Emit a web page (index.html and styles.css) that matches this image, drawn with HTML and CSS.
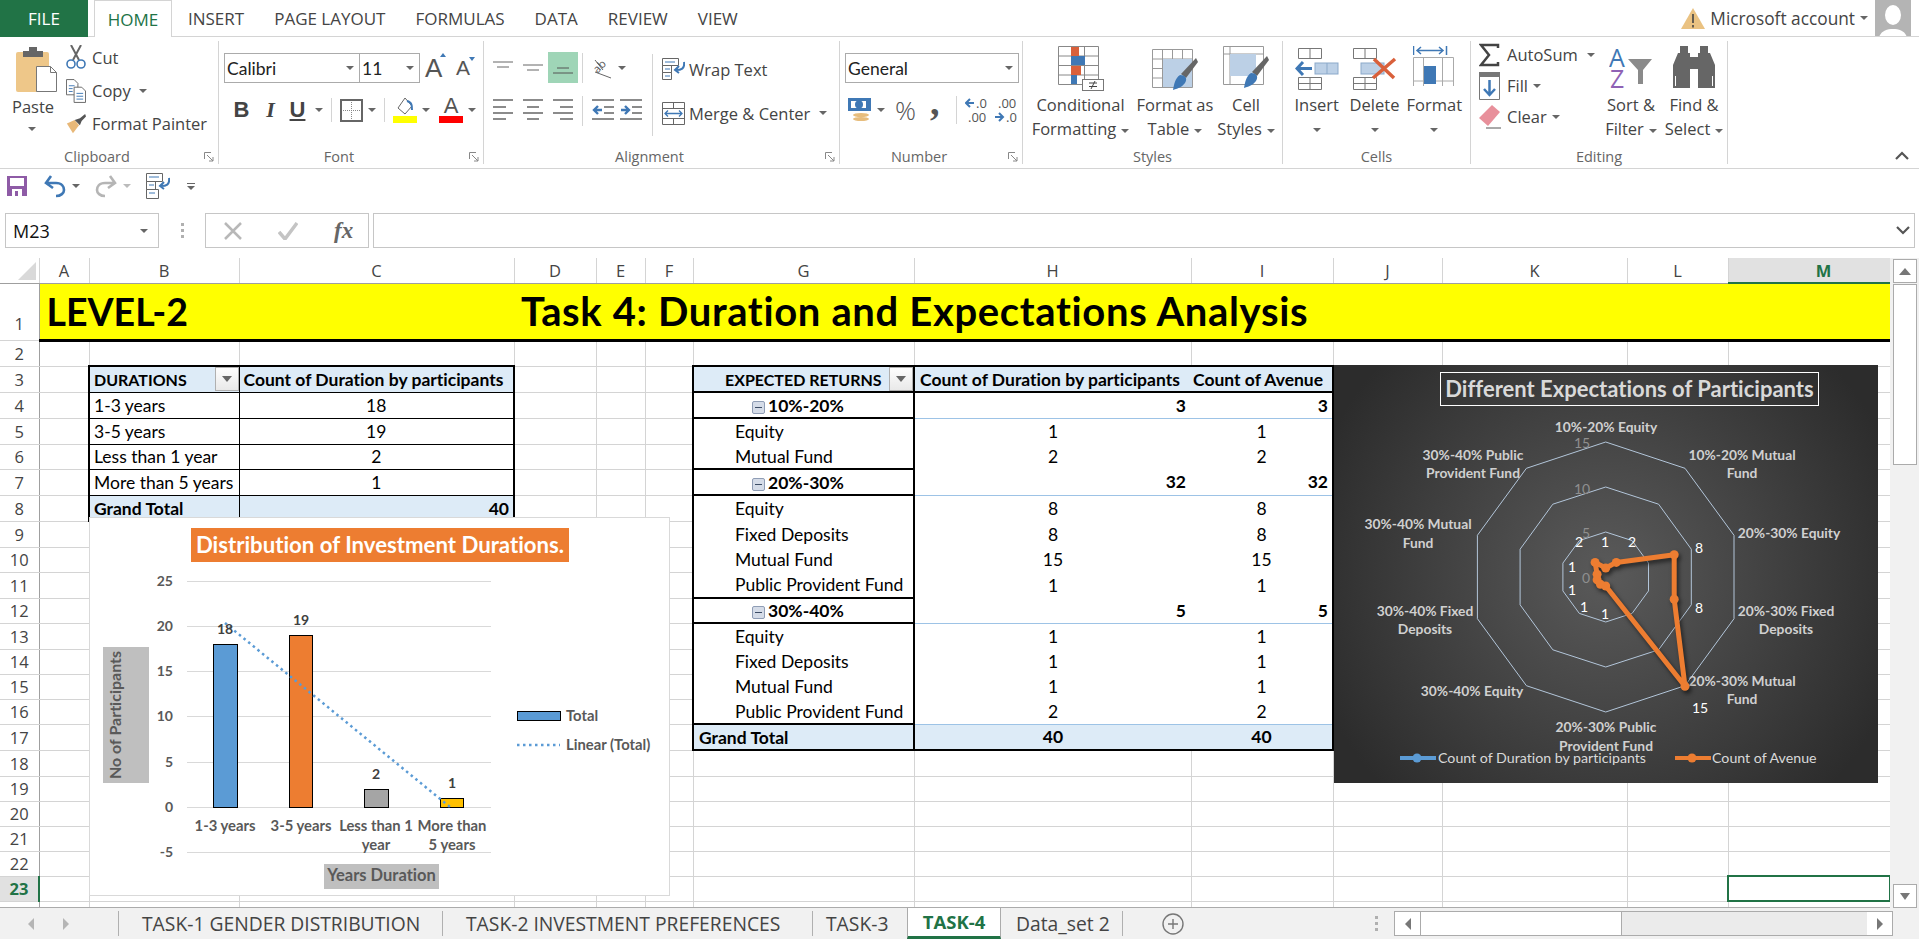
FILE: index.html
```html
<!DOCTYPE html>
<html lang="en">
<head>
<meta charset="UTF-8">
<title>Task 4 - Excel</title>
<link rel="stylesheet" href="styles.css">
</head>
<body>

<!-- ribbon tabs -->
<nav class="tabs">
  <div class="tab-file">FILE</div>
  <div class="tab tab-home">HOME</div>
  <div class="tab">INSERT</div>
  <div class="tab">PAGE LAYOUT</div>
  <div class="tab">FORMULAS</div>
  <div class="tab">DATA</div>
  <div class="tab">REVIEW</div>
  <div class="tab">VIEW</div>
  <div class="account">
    <svg width="24" height="21" viewBox="0 0 24 21"><path d="M12 0L24 21H0Z" fill="#eac282"/><path d="M12 6v9M12 17v2.500" stroke="#444" stroke-width="1.600"/></svg>
    <span>Microsoft account</span>
    <i class="caret"></i>
    <svg class="avatar" width="36" height="44" viewBox="0 0 36 44"><rect width="36" height="44" fill="#b4b4b4"/><ellipse cx="18" cy="15" rx="8" ry="10" fill="#fff"/><path d="M3 44c0-12 7-15 15-15s15 3 15 15z" fill="#fff"/></svg>
  </div>
</nav>

<!-- ribbon -->
<div class="ribbon">

  <section class="group g-clip">
    <div class="group-body">
      <div class="paste">
        <svg width="42" height="46" viewBox="0 0 42 46"><rect y="6" width="33" height="40" rx="2" fill="#eec789"/><path d="M7 5h6V1h8v4h6v6H7z" fill="#666"/><path d="M20.500 20.500h14l6 6v19h-20z" fill="#fff" stroke="#777"/><path d="M34.500 20.500v6h6" fill="none" stroke="#777"/></svg>
        <span class="paste-label">Paste</span>
        <i class="caret"></i>
      </div>
      <div class="small-col">
        <div class="small"><svg width="20" height="25" viewBox="0 0 20 25"><path d="M5 0l8 15M15 0L7 15" stroke="#666" stroke-width="2"/><circle cx="5" cy="19" r="4" fill="none" stroke="#3f78b5" stroke-width="1.600"/><circle cx="15" cy="19" r="4" fill="none" stroke="#3f78b5" stroke-width="1.600"/></svg><span>Cut</span></div>
        <div class="small"><svg width="20" height="24" viewBox="0 0 21 25"><path d="M.5.500h8l4 4v12H.5z" fill="#fff" stroke="#666"/><path d="M8.500 8.500h8l4 4v12h-12z" fill="#fff" stroke="#666"/><path d="M3 7h6M3 10h4M3 13h4M11 15h7M11 18h7M11 21h7" stroke="#3f78b5"/></svg><span>Copy</span><i class="caret caret-copy"></i></div>
        <div class="small"><svg width="20" height="20" viewBox="0 0 23 23"><path d="M1 11l9-4 5 6-7 9z" fill="#e8b878"/><path d="M10 7l6-2 6-5 1 3-5 5-2 5z" fill="#555"/></svg><span>Format Painter</span></div>
      </div>
    </div>
    <div class="group-label"><span>Clipboard</span><svg class="launch" width="10" height="10" viewBox="0 0 10 10"><path d="M.5 7V.5H7M3 3l6 6M9 5v4H5" fill="none" stroke="#888"/></svg></div>
  </section>

  <section class="group g-font">
    <div class="group-body column">
      <div class="row-top">
        <div class="combo combo-font"><span>Calibri</span><i class="caret"></i></div>
        <div class="combo combo-size"><span>11</span><i class="caret"></i></div>
        <div class="grow"><span class="grow-a">A</span><i class="tri tri-up"></i></div>
        <div class="grow grow-down"><span class="grow-a grow-sm">A</span><i class="tri tri-down"></i></div>
      </div>
      <div class="row-low">
        <span class="fmt fmt-b">B</span>
        <span class="fmt fmt-i">I</span>
        <span class="fmt fmt-u">U</span>
        <i class="caret"></i>
        <i class="vsep vsep-font"></i>
        <svg width="23" height="23" viewBox="0 0 23 23"><rect x="1" y="1" width="21" height="21" fill="#fff" stroke="#666" stroke-width="2"/><path d="M11.500 3v17M3 11.500h17" stroke="#888" stroke-dasharray="1 1"/></svg>
        <i class="caret caret-gap"></i>
        <i class="vsep vsep-font"></i>
        <span class="swatch"><svg width="24" height="18" viewBox="0 0 24 18"><path d="M12 0l-7 10 7 6 7-8z" fill="#fff" stroke="#666"/><path d="M14 3c5 1 5 5 5 9" fill="none" stroke="#3f78b5" stroke-width="2"/></svg><i class="bar bar-yellow"></i></span>
        <i class="caret caret-gap"></i>
        <span class="swatch swatch-a"><span class="swatch-letter">A</span><i class="bar bar-red"></i></span>
        <i class="caret caret-gap"></i>
      </div>
    </div>
    <div class="group-label"><span>Font</span><svg class="launch" width="10" height="10" viewBox="0 0 10 10"><path d="M.5 7V.5H7M3 3l6 6M9 5v4H5" fill="none" stroke="#888"/></svg></div>
  </section>

  <section class="group g-align">
    <div class="group-body">
      <div class="column">
        <div class="row-top align-top">
          <span class="abtn"><svg width="20" height="14" viewBox="0 0 20 14"><path d="M0 1h20M4 6h12" stroke="#666"/></svg></span>
          <span class="abtn"><svg width="20" height="14" viewBox="0 0 20 14"><path d="M0 4h20M4 9h12" stroke="#666"/></svg></span>
          <span class="abtn abtn-on"><svg width="20" height="14" viewBox="0 0 20 14"><path d="M4 7h12M0 12h20" stroke="#555"/></svg></span>
          <i class="vsep vsep-align"></i>
          <svg class="orient" width="20" height="24" viewBox="0 0 20 24"><path d="M2 16L18 22M2 4l8 10" stroke="#666" fill="none"/><text x="1" y="15" font-size="11" fill="#555" transform="rotate(-45 6 12)">ab</text></svg>
          <i class="caret"></i>
        </div>
        <div class="row-low align-low">
          <span class="abtn"><svg width="20" height="25" viewBox="0 0 20 25"><path d="M0 1h20M0 8h13M0 14h20M0 20h13" stroke="#666" stroke-width="1.300"/></svg></span>
          <span class="abtn"><svg width="20" height="25" viewBox="0 0 20 25"><path d="M0 1h20M4 8h12M0 14h20M4 20h12" stroke="#666" stroke-width="1.300"/></svg></span>
          <span class="abtn"><svg width="20" height="25" viewBox="0 0 20 25"><path d="M0 1h20M7 8h13M0 14h20M7 20h13" stroke="#666" stroke-width="1.300"/></svg></span>
          <i class="vsep vsep-align"></i>
          <svg class="indent" width="22" height="25" viewBox="0 0 22 25"><path d="M0 1h22M12 8h10M12 14h10M0 20h22" stroke="#666" stroke-width="1.300"/><path d="M10 11H3M6 7l-4 4 4 4" fill="none" stroke="#3f78b5" stroke-width="2.400"/></svg>
          <svg class="indent" width="22" height="25" viewBox="0 0 22 25"><path d="M0 1h22M12 8h10M12 14h10M0 20h22" stroke="#666" stroke-width="1.300"/><path d="M1 11h7M5 7l4 4-4 4" fill="none" stroke="#3f78b5" stroke-width="2.400"/></svg>
        </div>
      </div>
      <i class="vsep vsep-tall"></i>
      <div class="column wrap-col">
        <div class="small small-wrap"><svg width="23" height="22" viewBox="0 0 23 22"><path d="M.5.500h16v7H.5zM.5 7.500h9v7H.5zM.5 14.500h9v7H.5z" fill="#fff" stroke="#666"/><path d="M3 4h10M3 11h5M3 18h5" stroke="#3f78b5"/><path d="M22 4c1 7-3 8-8 8M17 8l-4 4 4 3" fill="none" stroke="#3f78b5" stroke-width="2"/></svg><span>Wrap Text</span></div>
        <div class="small small-wrap"><svg width="23" height="23" viewBox="0 0 23 23"><path d="M.5.500h22v22H.5zM.5 6.500h22M.5 16.500h22M11.500.500v6M11.500 16.500v6" fill="none" stroke="#666"/><path d="M3 11.500h17M6 8.500l-3 3 3 3M17 8.500l3 3-3 3" fill="none" stroke="#3f78b5" stroke-width="1.300"/></svg><span>Merge &amp; Center</span><i class="caret caret-merge"></i></div>
      </div>
    </div>
    <div class="group-label"><span>Alignment</span><svg class="launch" width="10" height="10" viewBox="0 0 10 10"><path d="M.5 7V.5H7M3 3l6 6M9 5v4H5" fill="none" stroke="#888"/></svg></div>
  </section>

  <section class="group g-number">
    <div class="group-body column">
      <div class="row-top">
        <div class="combo combo-general"><span>General</span><i class="caret"></i></div>
      </div>
      <div class="row-low num-low">
        <svg width="24" height="26" viewBox="0 0 24 26"><rect y="1" width="23" height="13" fill="#3f78b5"/><rect x="3" y="4" width="15" height="7" fill="#fff"/><circle cx="11" cy="7.500" r="4" fill="#3f78b5"/><ellipse cx="13" cy="18" rx="8" ry="2" fill="#e7bd7d"/><ellipse cx="13" cy="22" rx="8" ry="2" fill="#e7bd7d"/></svg>
        <i class="caret caret-gap"></i>
        <span class="pct">%</span>
        <span class="comma">,</span>
        <i class="vsep vsep-num"></i>
        <svg class="dec" width="54" height="28" viewBox="0 0 54 28"><path d="M9 7H2M5 3L1 7l4 4" fill="none" stroke="#3f78b5" stroke-width="2"/><text x="11" y="12" font-size="13" fill="#555">.0</text><text x="3" y="26" font-size="13" fill="#555">.00</text><text x="33" y="12" font-size="13" fill="#555">.00</text><path d="M30 21h7M34 17l4 4-4 4" fill="none" stroke="#3f78b5" stroke-width="2"/><text x="41" y="26" font-size="13" fill="#555">.0</text></svg>
      </div>
    </div>
    <div class="group-label"><span>Number</span><svg class="launch" width="10" height="10" viewBox="0 0 10 10"><path d="M.5 7V.5H7M3 3l6 6M9 5v4H5" fill="none" stroke="#888"/></svg></div>
  </section>

  <section class="group g-styles">
    <div class="group-body">
      <div class="big big-cond">
        <svg width="46" height="45" viewBox="0 0 46 45"><path d="M.5.500h40v38H.5zM13.500.500v38M26.500.500v38M.5 10h40M.5 19.500h40M.5 29h40" fill="none" stroke="#888"/><rect x="13" y="1" width="8" height="9" fill="#d9603b"/><rect x="13" y="10" width="14" height="9" fill="#3f78b5"/><rect x="13" y="20" width="10" height="9" fill="#d9603b"/><rect x="13" y="29" width="6" height="9" fill="#3f78b5"/><rect x="24.500" y="33.500" width="21" height="11" fill="#fff" stroke="#777"/><path d="M31 37h8M31 40.500h8M37 35l-4 8" stroke="#444" fill="none"/></svg>
        <span>Conditional</span>
        <span>Formatting<i class="caret caret-in"></i></span>
      </div>
      <div class="big big-table">
        <svg width="46" height="45" viewBox="0 0 46 45"><path d="M.5 3.500h40v38H.5zM10.500 3.500v38M20.500 3.500v38M30.500 3.500v38M.5 13h40M.5 22.500h40M.5 32h40" fill="none" stroke="#999"/><rect x="11" y="13" width="29" height="28" fill="#bcd0e6"/><path d="M44 12l2 4-12 16-5-4z" fill="#666"/><path d="M28 29c5 0 8 3 5 8-3 4-6 5-12 7 1-5 2-12 7-15z" fill="#3f78b5"/></svg>
        <span>Format as</span>
        <span>Table<i class="caret caret-in"></i></span>
      </div>
      <div class="big big-cell">
        <svg width="46" height="45" viewBox="0 0 46 45"><path d="M.5.500h40v38H.5zM.5 8h40M7 .500v38" fill="none" stroke="#999"/><rect x="7" y="8" width="26" height="22" fill="#bcd0e6"/><path d="M44 10l2 4-12 16-5-4z" fill="#666"/><path d="M28 27c5 0 8 3 5 8-3 4-6 5-12 7 1-5 2-12 7-15z" fill="#3f78b5"/></svg>
        <span>Cell</span>
        <span>Styles<i class="caret caret-in"></i></span>
      </div>
    </div>
    <div class="group-label group-label-plain"><span>Styles</span></div>
  </section>

  <section class="group g-cells">
    <div class="group-body">
      <div class="big big-insert">
        <svg width="44" height="45" viewBox="0 0 44 45"><path d="M3.500 2.500h23v10h-23zM15 2.500v10M3.500 31.500h23v12h-23zM15 31.500v12M3.500 37.500h23" fill="none" stroke="#777"/><rect x="20" y="17" width="23" height="11" fill="#bcd0e6" stroke="#8ba9ca"/><path d="M32 17v11" stroke="#8ba9ca"/><path d="M17 22.500H2M8 16l-6 6.500L8 29" fill="none" stroke="#3f78b5" stroke-width="3"/></svg>
        <span>Insert</span>
        <i class="caret caret-big"></i>
      </div>
      <div class="big big-delete">
        <svg width="46" height="45" viewBox="0 0 46 45"><path d="M1.500 2.500h23v10h-23zM13 2.500v10M1.500 31.500h23v12h-23zM13 31.500v12M1.500 37.500h23" fill="none" stroke="#777"/><rect x="9" y="17" width="23" height="11" fill="#bcd0e6" stroke="#8ba9ca"/><path d="M22 13l20 19M43 13L21 32" stroke="#d9603b" stroke-width="3.500"/></svg>
        <span>Delete</span>
        <i class="caret caret-big"></i>
      </div>
      <div class="big big-format">
        <svg width="42" height="45" viewBox="0 0 42 45"><path d="M.5 0v9M33.500 0v9M4 4.500h26M8 1L4 4.500 8 8M26 1l4 3.500L26 8" fill="none" stroke="#3f78b5" stroke-width="1.500"/><path d="M.5 11.500h40v36H.5zM10.500 11.500v36M29.500 11.500v36M.5 35h40" fill="none" stroke="#aaa"/><rect x="11" y="20" width="12" height="18" fill="#3f78b5"/><rect x="0" y="40" width="42" height="5" fill="#fff"/></svg>
        <span>Format</span>
        <i class="caret caret-big"></i>
      </div>
    </div>
    <div class="group-label group-label-plain"><span>Cells</span></div>
  </section>

  <section class="group g-edit">
    <div class="group-body">
      <div class="small-col edit-col">
        <div class="small"><svg width="22" height="24" viewBox="0 0 22 24"><path d="M19 5V2H2l8 10-8 10h17v-3" fill="none" stroke="#444" stroke-width="2.500"/></svg><span>AutoSum</span><i class="caret caret-sum"></i></div>
        <div class="small"><svg width="22" height="28" viewBox="0 0 22 28"><path d="M.5.500h20v27H.5z" fill="#fff" stroke="#777"/><rect width="21" height="5" fill="#777"/><path d="M10.500 8v14M5 17l5.500 6 5.500-6" fill="none" stroke="#3f78b5" stroke-width="2.500"/></svg><span>Fill</span><i class="caret caret-fill"></i></div>
        <div class="small"><svg width="22" height="24" viewBox="0 0 22 24"><path d="M13 0l8 7-12 14-9-8z" fill="#e8909b"/><path d="M7 23h15" stroke="#555"/></svg><span>Clear</span><i class="caret caret-fill"></i></div>
      </div>
      <div class="big big-sort">
        <svg width="44" height="42" viewBox="0 0 44 42"><text x="0" y="21" font-size="25" fill="#3f78b5">A</text><text x="1" y="42" font-size="25" fill="#8f62b5">Z</text><path d="M19 13h24l-9 11v14h-5V24z" fill="#8a8a8a"/></svg>
        <span>Sort &amp;</span>
        <span>Filter<i class="caret caret-in"></i></span>
      </div>
      <div class="big big-find">
        <svg width="44" height="42" viewBox="0 0 44 42"><path d="M8 0h8v7h2v35H1V19L6 7h2zM28 0h8v7h2l5 12v23H26V7h2zM18 11h8v12h-8z" fill="#666"/><path d="M3.500 30v10M40.500 30v10" stroke="#fff"/></svg>
        <span>Find &amp;</span>
        <span>Select<i class="caret caret-in"></i></span>
      </div>
    </div>
    <div class="group-label group-label-plain"><span>Editing</span></div>
  </section>

  <div class="ribbon-end">
    <svg width="14" height="10" viewBox="0 0 14 10"><path d="M1 9l6-6 6 6" fill="none" stroke="#555" stroke-width="2.200"/></svg>
  </div>
</div>

<!-- quick access -->
<div class="qat">
  <svg class="qat-save" width="20" height="20" viewBox="0 0 20 20"><path d="M0 0h20v20H0z" fill="#8e5ba6"/><path d="M3 2h14v8H3z" fill="#fff"/><path d="M5 13h10v7H5z" fill="#fff"/><path d="M8 15h3v5H8z" fill="#8e5ba6"/></svg>
  <svg class="qat-undo" width="22" height="24" viewBox="0 0 22 24"><path d="M7 2L2 9l7 5M3 9h9c6 0 8 4 8 7s-3 6-8 6" fill="none" stroke="#3f78b5" stroke-width="2.600"/></svg>
  <i class="caret caret-qat"></i>
  <svg class="qat-redo" width="22" height="24" viewBox="0 0 22 24"><path d="M15 2l5 7-7 5M19 9h-9c-6 0-8 4-8 7s3 6 8 6" fill="none" stroke="#b5b5b5" stroke-width="2.600"/></svg>
  <i class="caret caret-qat caret-off"></i>
  <svg class="qat-wrap" width="24" height="26" viewBox="0 0 24 26"><path d="M.5.500h16v8H.5zM.5 8.500h9v8H.5zM.5 16.500h12v9H.5z" fill="#fff" stroke="#666"/><path d="M3 4h10M3 12h5M3 20h6" stroke="#3f78b5"/><path d="M23 5c1 7-3 8-8 8M18 9l-4 4 4 3" fill="none" stroke="#3f78b5" stroke-width="2"/></svg>
  <span class="qat-more"><i></i><i class="caret"></i></span>
</div>

<!-- formula bar -->
<div class="formula">
  <div class="namebox"><span>M23</span><i class="caret"></i></div>
  <div class="fdots"><i></i><i></i><i></i></div>
  <div class="fbtns">
    <svg width="18" height="18" viewBox="0 0 18 18"><path d="M1 1l16 16M17 1L1 17" stroke="#b8b8b8" stroke-width="2.500"/></svg>
    <svg width="20" height="18" viewBox="0 0 20 18"><path d="M1 10l6 7L19 1" fill="none" stroke="#c4c4c4" stroke-width="3.500"/></svg>
    <span class="fx">fx</span>
  </div>
  <div class="finput"><svg width="14" height="10" viewBox="0 0 14 10"><path d="M1 1l6 6 6-6" fill="none" stroke="#555" stroke-width="2.200"/></svg></div>
</div>

<!-- worksheet -->
<div class="workspace">
  <div class="sheet">
    <table class="grid">
      <colgroup>
        <col class="c-rh"><col class="c-a"><col class="c-b"><col class="c-c"><col class="c-d"><col class="c-e"><col class="c-f"><col class="c-g"><col class="c-h"><col class="c-i"><col class="c-j"><col class="c-k"><col class="c-l"><col class="c-m">
      </colgroup>
      <tr class="hdr"><th class="corner"><svg width="18" height="18" viewBox="0 0 18 18"><path d="M18 0v18H0z" fill="#d9d9d9"/></svg></th><th>A</th><th>B</th><th>C</th><th>D</th><th>E</th><th>F</th><th>G</th><th>H</th><th>I</th><th>J</th><th>K</th><th>L</th><th class="col-on">M</th></tr>
      <tr class="r-title"><th class="rownum rownum-low">1</th><td colspan="13" class="title-cell"><div class="title-row"><span>LEVEL-2</span><span class="title-main">Task 4: Duration and Expectations Analysis</span></div></td></tr>
      <tr class="r26"><th class="rownum">2</th><td></td><td></td><td></td><td></td><td></td><td></td><td></td><td></td><td></td><td></td><td></td><td></td><td></td></tr>
      <tr class="r26"><th class="rownum">3</th><td></td>
        <td class="p1 p1-l p1-t head"><div class="hd-cell"><span class="caps">DURATIONS</span><span class="filter"><i class="caret"></i></span></div></td>
        <td class="p1 p1-r p1-t head">Count of Duration by participants</td>
        <td></td><td></td><td></td>
        <td class="pv-g pv-gg head"><div class="hd-cell hd-center"><span class="caps">EXPECTED RETURNS</span><span class="filter"><i class="caret"></i></span></div></td>
        <td class="pv-top head">Count of Duration by participants</td>
        <td class="pv-top pv-r head hd-avenue">Count of Avenue</td>
        <td></td><td></td><td></td><td></td></tr>
      <tr class="r26"><th class="rownum">4</th><td></td><td class="p1 p1-l">1-3 years</td><td class="p1 p1-r num">18</td><td></td><td></td><td></td>
        <td class="pv-g pv-gg bold ctr"><svg class="minus" width="13" height="13" viewBox="0 0 13 13"><rect x=".5" y=".5" width="12" height="12" rx="1.500" fill="#d5dce8" stroke="#8f9db5"/><path d="M3 6.500h7" stroke="#3d4d66"/></svg>10%-20%</td>
        <td class="pv-sub tot">3</td><td class="pv-sub pv-r tot">3</td><td></td><td></td><td></td><td></td></tr>
      <tr class="r26"><th class="rownum">5</th><td></td><td class="p1 p1-l">3-5 years</td><td class="p1 p1-r num">19</td><td></td><td></td><td></td>
        <td class="pv-g item">Equity</td><td class="pv-v num">1</td><td class="pv-v pv-r num">1</td><td></td><td></td><td></td><td></td></tr>
      <tr class="r25"><th class="rownum">6</th><td></td><td class="p1 p1-l">Less than 1 year</td><td class="p1 p1-r num">2</td><td></td><td></td><td></td>
        <td class="pv-g item">Mutual Fund</td><td class="pv-v num">2</td><td class="pv-v pv-r num">2</td><td></td><td></td><td></td><td></td></tr>
      <tr class="r26"><th class="rownum">7</th><td></td><td class="p1 p1-l">More than 5 years</td><td class="p1 p1-r num">1</td><td></td><td></td><td></td>
        <td class="pv-g pv-gg bold ctr"><svg class="minus" width="13" height="13" viewBox="0 0 13 13"><rect x=".5" y=".5" width="12" height="12" rx="1.500" fill="#d5dce8" stroke="#8f9db5"/><path d="M3 6.500h7" stroke="#3d4d66"/></svg>20%-30%</td>
        <td class="pv-sub tot">32</td><td class="pv-sub pv-r tot">32</td><td></td><td></td><td></td><td></td></tr>
      <tr class="r26"><th class="rownum">8</th><td></td><td class="p1 p1-l head">Grand Total</td><td class="p1 p1-r head tot">40</td><td></td><td></td><td></td>
        <td class="pv-g item">Equity</td><td class="pv-v num">8</td><td class="pv-v pv-r num">8</td><td></td><td></td><td></td><td></td></tr>
      <tr class="r26"><th class="rownum">9</th><td></td><td></td><td></td><td></td><td></td><td></td>
        <td class="pv-g item">Fixed Deposits</td><td class="pv-v num">8</td><td class="pv-v pv-r num">8</td><td></td><td></td><td></td><td></td></tr>
      <tr class="r25"><th class="rownum">10</th><td></td><td></td><td></td><td></td><td></td><td></td>
        <td class="pv-g item">Mutual Fund</td><td class="pv-v num">15</td><td class="pv-v pv-r num">15</td><td></td><td></td><td></td><td></td></tr>
      <tr class="r26"><th class="rownum">11</th><td></td><td></td><td></td><td></td><td></td><td></td>
        <td class="pv-g item">Public Provident Fund</td><td class="pv-v num">1</td><td class="pv-v pv-r num">1</td><td></td><td></td><td></td><td></td></tr>
      <tr class="r25"><th class="rownum">12</th><td></td><td></td><td></td><td></td><td></td><td></td>
        <td class="pv-g pv-gg bold ctr"><svg class="minus" width="13" height="13" viewBox="0 0 13 13"><rect x=".5" y=".5" width="12" height="12" rx="1.500" fill="#d5dce8" stroke="#8f9db5"/><path d="M3 6.500h7" stroke="#3d4d66"/></svg>30%-40%</td>
        <td class="pv-sub tot">5</td><td class="pv-sub pv-r tot">5</td><td></td><td></td><td></td><td></td></tr>
      <tr class="r26"><th class="rownum">13</th><td></td><td></td><td></td><td></td><td></td><td></td>
        <td class="pv-g item">Equity</td><td class="pv-v num">1</td><td class="pv-v pv-r num">1</td><td></td><td></td><td></td><td></td></tr>
      <tr class="r25"><th class="rownum">14</th><td></td><td></td><td></td><td></td><td></td><td></td>
        <td class="pv-g item">Fixed Deposits</td><td class="pv-v num">1</td><td class="pv-v pv-r num">1</td><td></td><td></td><td></td><td></td></tr>
      <tr class="r25"><th class="rownum">15</th><td></td><td></td><td></td><td></td><td></td><td></td>
        <td class="pv-g item">Mutual Fund</td><td class="pv-v num">1</td><td class="pv-v pv-r num">1</td><td></td><td></td><td></td><td></td></tr>
      <tr class="r25"><th class="rownum">16</th><td></td><td></td><td></td><td></td><td></td><td></td>
        <td class="pv-g item">Public Provident Fund</td><td class="pv-v num">2</td><td class="pv-v pv-r num">2</td><td></td><td></td><td></td><td></td></tr>
      <tr class="r26"><th class="rownum">17</th><td></td><td></td><td></td><td></td><td></td><td></td>
        <td class="pv-g pv-gg head bold">Grand Total</td><td class="pv-tot head num bold">40</td><td class="pv-tot pv-r head num bold">40</td><td></td><td></td><td></td><td></td></tr>
      <tr class="r26"><th class="rownum">18</th><td></td><td></td><td></td><td></td><td></td><td></td><td></td><td></td><td></td><td></td><td></td><td></td><td></td></tr>
      <tr class="r25"><th class="rownum">19</th><td></td><td></td><td></td><td></td><td></td><td></td><td></td><td></td><td></td><td></td><td></td><td></td><td></td></tr>
      <tr class="r25"><th class="rownum">20</th><td></td><td></td><td></td><td></td><td></td><td></td><td></td><td></td><td></td><td></td><td></td><td></td><td></td></tr>
      <tr class="r25"><th class="rownum">21</th><td></td><td></td><td></td><td></td><td></td><td></td><td></td><td></td><td></td><td></td><td></td><td></td><td></td></tr>
      <tr class="r25"><th class="rownum">22</th><td></td><td></td><td></td><td></td><td></td><td></td><td></td><td></td><td></td><td></td><td></td><td></td><td></td></tr>
      <tr class="r25"><th class="rownum row-on">23</th><td></td><td></td><td></td><td></td><td></td><td></td><td></td><td></td><td></td><td></td><td></td><td></td><td class="sel"></td></tr>
      <tr class="r25"><th class="rownum"></th><td></td><td></td><td></td><td></td><td></td><td></td><td></td><td></td><td></td><td></td><td></td><td></td><td></td></tr>
    </table>

    <!-- bar chart, coordinates in the viewBox are sheet pixels -->
    <div class="chart chart-bars">
      <svg width="581" height="379" viewBox="89 517 581 379">
        <rect x="190" y="527" width="378" height="34" fill="#ed7d31"/>
        <text class="t-title" x="379" y="552">Distribution of Investment Durations.</text>
        <path d="M186 580.500h304M186 625.500h304M186 670.500h304M186 715.500h304M186 761.500h304M186 806.500h304M186 851.500h304" stroke="#d9d9d9" stroke-width="1"/>
        <g class="t-axis">
          <text x="172" y="585">25</text><text x="172" y="630">20</text><text x="172" y="675">15</text><text x="172" y="720">10</text><text x="172" y="766">5</text><text x="172" y="811">0</text><text x="172" y="856">-5</text>
        </g>
        <rect x="212.500" y="643.500" width="24" height="163" fill="#5b9bd5" stroke="#000"/>
        <rect x="288.500" y="634.500" width="23" height="172" fill="#ed7d31" stroke="#000"/>
        <rect x="363.500" y="788.500" width="24" height="18" fill="#a5a5a5" stroke="#000"/>
        <rect x="439.500" y="797.500" width="23" height="9" fill="#ffc000" stroke="#000"/>
        <path d="M224 622L449 806" stroke="#5b9bd5" stroke-width="2.500" stroke-dasharray="2.500 3.500" fill="none"/>
        <g class="t-label">
          <text x="224" y="633">18</text><text x="300" y="624">19</text><text x="375" y="778">2</text><text x="451" y="787">1</text>
        </g>
        <g class="t-cat">
          <text x="224" y="830">1-3 years</text><text x="300" y="830">3-5 years</text><text x="375" y="830">Less than 1</text><text x="375" y="849">year</text><text x="451" y="830">More than</text><text x="451" y="849">5 years</text>
        </g>
        <rect x="323" y="863" width="115" height="25" fill="#bfbfbf"/>
        <text class="t-axtitle" x="380.500" y="875.500">Years Duration</text>
        <rect x="102" y="646" width="46" height="136" fill="#bfbfbf"/>
        <text class="t-axtitle t-axtitle-y" transform="translate(116 714) rotate(-90)">No of Participants</text>
        <rect x="516.500" y="710.500" width="43" height="9" fill="#5b9bd5" stroke="#000"/>
        <path d="M516 744h43" stroke="#5b9bd5" stroke-width="2.500" stroke-dasharray="2.500 3.500"/>
        <g class="t-legend">
          <text x="565" y="720">Total</text><text x="565" y="749">Linear (Total)</text>
        </g>
      </svg>
    </div>

    <!-- radar chart, same idea -->
    <div class="chart chart-radar">
      <svg width="544" height="418" viewBox="1334 365 544 418">
        <rect x="1440.500" y="372.500" width="378" height="33" fill="none" stroke="#fff"/>
        <text class="r-title" x="1629.500" y="397">Different Expectations of Participants</text>
        <g class="r-web">
          <path d="M1605.700 442L1685 468.300L1734 535.300L1734 618.700L1685 685.700L1605.700 712L1526.400 685.700L1477.400 618.700L1477.400 535.300L1526.400 468.300Z"/>
          <path d="M1605.700 487L1658.600 504.200L1691.300 549.200L1691.300 604.800L1658.600 649.800L1605.700 667L1552.800 649.800L1520.100 604.800L1520.100 549.200L1552.800 504.200Z"/>
          <path d="M1605.700 532L1632.100 540.600L1648.500 563.100L1648.500 590.900L1632.100 613.400L1605.700 622L1579.300 613.400L1562.900 590.900L1562.900 563.100L1579.300 540.600Z"/>
        </g>
        <g class="r-axis">
          <text x="1582" y="448">15</text><text x="1582" y="494">10</text><text x="1586" y="538">5</text><text x="1586" y="583">0</text>
        </g>
        <g class="r-cat">
          <text x="1606" y="432">10%-20% Equity</text>
          <text x="1742" y="460">10%-20% Mutual</text><text x="1742" y="478">Fund</text>
          <text x="1789" y="538">20%-30% Equity</text>
          <text x="1786" y="616">20%-30% Fixed</text><text x="1786" y="634">Deposits</text>
          <text x="1742" y="686">20%-30% Mutual</text><text x="1742" y="704">Fund</text>
          <text x="1606" y="732">20%-30% Public</text><text x="1606" y="751">Provident Fund</text>
          <text x="1472" y="696">30%-40% Equity</text>
          <text x="1425" y="616">30%-40% Fixed</text><text x="1425" y="634">Deposits</text>
          <text x="1418" y="529">30%-40% Mutual</text><text x="1418" y="548">Fund</text>
          <text x="1473" y="460">30%-40% Public</text><text x="1473" y="478">Provident Fund</text>
        </g>
        <g class="r-series">
          <path d="M1605.700 568L1616.300 562.400L1674.200 554.800L1674.200 599.200L1685 686.200L1605.700 586L1600.400 584.300L1597.100 579.800L1597.100 574.200L1595.100 562.400Z" fill="none" stroke="#ed7d31" stroke-width="5" stroke-linejoin="round"/>
          <g fill="#ed7d31">
            <circle cx="1605.700" cy="568" r="4.500"/><circle cx="1616.300" cy="562.400" r="4.500"/><circle cx="1674.200" cy="554.800" r="4.500"/><circle cx="1674.200" cy="599.200" r="4.500"/><circle cx="1685" cy="686.200" r="4.500"/><circle cx="1605.700" cy="586" r="4.500"/><circle cx="1600.400" cy="584.300" r="4.500"/><circle cx="1597.100" cy="579.800" r="4.500"/><circle cx="1597.100" cy="574.200" r="4.500"/><circle cx="1595.100" cy="562.400" r="4.500"/>
          </g>
        </g>
        <g class="r-data">
          <text x="1605" y="547">1</text><text x="1632" y="547">2</text><text x="1699" y="553">8</text><text x="1699" y="613">8</text><text x="1700" y="713">15</text><text x="1605" y="619">1</text><text x="1584" y="612">1</text><text x="1572" y="595">1</text><text x="1572" y="572">1</text><text x="1579" y="547">2</text>
        </g>
        <path d="M1400 758h36" stroke="#5b9bd5" stroke-width="4"/><circle cx="1417" cy="758" r="4.500" fill="#5b9bd5"/>
        <path d="M1675 758h36" stroke="#ed7d31" stroke-width="4"/><circle cx="1692" cy="758" r="4.500" fill="#ed7d31"/>
        <g class="r-legend">
          <text x="1438" y="763">Count of Duration by participants</text><text x="1712" y="763">Count of Avenue</text>
        </g>
      </svg>
    </div>
  </div>

  <div class="vscroll">
    <span class="vbtn"><i class="tri tri-scroll-up"></i></span>
    <span class="vthumb"></span>
    <span class="vtrack"></span>
    <span class="vbtn"><i class="tri tri-scroll-down"></i></span>
  </div>
</div>

<!-- sheet tabs -->
<footer class="sheetbar">
  <div class="sheet-nav"><i class="tri tri-left"></i><i class="tri tri-right"></i></div>
  <div class="stab stab-sep stab-1">TASK-1 GENDER DISTRIBUTION</div>
  <div class="stab stab-sep stab-2">TASK-2 INVESTMENT PREFERENCES</div>
  <div class="stab stab-3">TASK-3</div>
  <div class="stab stab-on">TASK-4</div>
  <div class="stab stab-data">Data_set 2</div>
  <svg class="stab-add" width="22" height="22" viewBox="0 0 22 22"><circle cx="11" cy="11" r="10" fill="none" stroke="#777" stroke-width="1.400"/><path d="M11 6v10M6 11h10" stroke="#777" stroke-width="1.400"/></svg>
  <div class="hscroll-wrap">
    <div class="fdots fdots-h"><i></i><i></i><i></i></div>
    <div class="hscroll">
      <span class="hbtn"><i class="tri tri-left tri-dark"></i></span>
      <span class="hthumb"></span>
      <span class="htrack"></span>
      <span class="hbtn"><i class="tri tri-right tri-dark"></i></span>
    </div>
  </div>
</footer>

</body>
</html>
```
FILE: styles.css
```css
/* page */
* {
  box-sizing: border-box;
}

body {
  margin: 0;
  width: 1919px;
  height: 939px;
  overflow: hidden;
  background: #fff;
  color: #444;
  font-family: "Open Sans", "Noto Sans", sans-serif;
  font-size: 16.500px;
  display: flex;
  flex-direction: column;
}

i {
  display: inline-block;
}

.caret {
  width: 0;
  height: 0;
  border-left: 4px solid transparent;
  border-right: 4px solid transparent;
  border-top: 4px solid #666;
}

.tri {
  width: 0;
  height: 0;
}

/* ribbon tabs */
.tabs {
  height: 37px;
  flex: none;
  display: flex;
  align-items: stretch;
  border-bottom: 1px solid #d4d4d4;
  font-size: 17px;
}

.tab-file {
  width: 88px;
  background: #217346;
  color: #fff;
  display: flex;
  align-items: center;
  justify-content: center;
  margin-bottom: -1px;
}

.tab {
  padding: 0 15px;
  display: flex;
  align-items: center;
}

.tab-home {
  width: 78px;
  margin: 0 1px -1px 6px;
  padding: 0;
  justify-content: center;
  color: #217346;
  background: #fff;
  border: 1px solid #d4d4d4;
  border-bottom: 0;
}

.account {
  margin-left: auto;
  display: flex;
  align-items: center;
  gap: 5px;
  padding-right: 8px;
  font-size: 17.300px;
  overflow: hidden;
}

.account .caret {
  margin: 0 2px 0 0;
}

.avatar {
  display: block;
  align-self: flex-start;
}

/* ribbon */
.ribbon {
  height: 132px;
  flex: none;
  display: flex;
  border-bottom: 1px solid #d4d4d4;
  padding-top: 4px;
}

.group {
  height: 123px;
  flex: none;
  display: flex;
  flex-direction: column;
  border-right: 1px solid #d4d4d4;
}

.g-clip { width: 219px; }
.g-font { width: 265px; }
.g-align { width: 356px; }
.g-number { width: 183px; }
.g-styles { width: 260px; }
.g-cells { width: 188px; }
.g-edit { width: 257px; }

.group-body {
  height: 102px;
  flex: none;
  display: flex;
}

.column {
  display: flex;
  flex-direction: column;
}

.group-label {
  height: 24px;
  flex: none;
  padding: 3px 4px 0 0;
  display: grid;
  grid-template-columns: 1fr auto 1fr;
  align-items: center;
  font-size: 14.500px;
  color: #666;
}

.group-label span {
  grid-column: 2;
  margin-right: 20px;
}

.group-label-plain {
  padding-right: 0;
}

.group-label-plain span {
  margin-right: 0;
}

.launch {
  grid-column: 3;
  justify-self: end;
}

/* clipboard */
.paste {
  width: 66px;
  display: flex;
  flex-direction: column;
  align-items: flex-start;
  padding: 5px 0 0 16px;
}

.paste-label {
  margin: 3px 0 0 -4px;
  line-height: 24px;
}

.paste .caret {
  margin: 8px 0 0 12px;
}

.small-col {
  display: flex;
  flex-direction: column;
}

.small {
  height: 33px;
  display: flex;
  align-items: center;
  white-space: nowrap;
}

.small svg {
  flex: none;
  margin-right: 6px;
}

.caret-copy { margin-left: 8px; }

/* font */
.row-top {
  display: flex;
  align-items: center;
  margin-top: 12px;
  height: 30px;
}

.row-low {
  display: flex;
  align-items: center;
  margin-top: 14px;
  height: 26px;
}

.g-font .group-body {
  padding-left: 5px;
}

.combo {
  height: 30px;
  flex: none;
  border: 1px solid #ababab;
  display: flex;
  align-items: center;
  justify-content: space-between;
  padding: 0 5px 0 2px;
  color: #222;
  font-family: Lato, sans-serif;
  font-size: 17.500px;
}

.combo-font { width: 136px; }
.combo-size { width: 61px; margin-left: -1px; }
.combo-general { width: 174px; margin-left: 5px; }

.grow {
  position: relative;
  flex: none;
  width: 31px;
  margin-left: 5px;
  font-family: "Liberation Sans", sans-serif;
}

.grow-down {
  margin-left: 0;
}

.grow-a {
  font-size: 26px;
  color: #555;
}

.grow-sm {
  font-size: 21px;
}

.tri-up {
  position: absolute;
  right: 10px;
  top: 0;
  border-left: 3.500px solid transparent;
  border-right: 3.500px solid transparent;
  border-bottom: 4px solid #3f78b5;
}

.tri-down {
  position: absolute;
  right: 12px;
  top: 1px;
  border-left: 3.500px solid transparent;
  border-right: 3.500px solid transparent;
  border-top: 4px solid #3f78b5;
}

.fmt {
  font-family: "Liberation Serif", serif;
  font-size: 22px;
  color: #444;
  width: 29px;
  text-align: center;
}

.fmt-b {
  font-family: "Liberation Sans", sans-serif;
  font-weight: 700;
  margin-left: 3px;
}

.fmt-i {
  font-style: italic;
  font-weight: 700;
}

.fmt-u {
  font-family: "Liberation Sans", sans-serif;
  font-weight: 700;
  text-decoration: underline;
  width: 25px;
}

.row-low .caret {
  margin-left: 5px;
}

.vsep {
  width: 1px;
  background: #d4d4d4;
  flex: none;
}

.vsep-font {
  height: 24px;
  margin: 0 8px;
}

.swatch {
  width: 24px;
  height: 26px;
  display: flex;
  flex-direction: column;
  justify-content: flex-end;
  align-items: center;
}

.swatch-a {
  margin-left: 9px;
}

.swatch-letter {
  font-family: "Liberation Sans", sans-serif;
  font-size: 22px;
  line-height: 20px;
  color: #555;
}

.bar {
  width: 24px;
  height: 7px;
  flex: none;
}

.bar-yellow { background: #ffff00; }
.bar-red { background: #ff0000; }

/* alignment */
.g-align .group-body {
  padding-left: 4px;
}

.abtn {
  width: 30px;
  height: 31px;
  display: flex;
  align-items: center;
  justify-content: center;
}

.abtn-on {
  background: #9fd5b7;
}

.align-top {
  margin-top: 11px;
  height: 31px;
}

.align-low {
  margin-top: 15px;
}

.vsep-align {
  height: 30px;
  margin: 0 9px 0 4px;
}

.orient {
  margin-left: 1px;
}

.align-top .caret {
  margin-left: 5px;
}

.indent {
  margin-right: 6px;
}

.vsep-tall {
  height: 82px;
  margin: 13px 9px 0 4px;
}

.wrap-col {
  padding-top: 6px;
}

.small-wrap {
  height: 44px;
}

.small-wrap svg {
  margin-right: 4px;
}

.caret-merge {
  margin-left: 9px;
}

/* number */
.num-low {
  padding-left: 8px;
}

.pct {
  font-size: 26px;
  font-weight: 300;
  line-height: 1;
  margin: 0 0 0 10px;
  color: #555;
}

.comma {
  font-family: "Liberation Serif", serif;
  font-size: 38px;
  font-weight: 700;
  line-height: 18px;
  margin: -16px 0 0 14px;
  color: #555;
}

.vsep-num {
  height: 28px;
  margin: 0 8px 0 16px;
}

/* big buttons */
.big {
  display: flex;
  flex-direction: column;
  align-items: center;
  padding-top: 5px;
  white-space: nowrap;
  line-height: 24px;
}

.big svg {
  margin-bottom: 2px;
}

.caret-in {
  margin-left: 5px;
  vertical-align: middle;
}

.caret-big {
  margin-top: 11px;
}

.big-cond { width: 111px; padding-left: 4px; }
.big-table { width: 82px; }
.big-cell { width: 60px; }
.big-insert { width: 68px; }
.big-delete { width: 48px; }
.big-format { width: 72px; }
.big-sort { width: 62px; }
.big-find { width: 64px; }

.big-sort svg,
.big-find svg {
  margin-bottom: 5px;
}

/* editing */
.edit-col {
  width: 129px;
  padding-left: 8px;
  margin-top: -2px;
}

.edit-col .small {
  height: 31px;
}

.caret-sum { margin-left: 9px; }
.caret-fill { margin-left: 5px; }

.ribbon-end {
  flex: 1;
  display: flex;
  align-items: flex-end;
  justify-content: flex-end;
  padding: 0 10px 8px 0;
}

/* quick access */
.qat {
  height: 44px;
  flex: none;
  display: flex;
  align-items: center;
  padding: 0 0 10px 7px;
}

.qat-undo { margin-left: 17px; }
.caret-qat { margin-left: 6px; }
.caret-off { border-top-color: #bbb; }
.qat-redo { margin-left: 15px; }
.qat-wrap { margin-left: 15px; }

.qat-more {
  margin-left: 17px;
  display: flex;
  flex-direction: column;
  gap: 2px;
}

.qat-more i:first-child {
  width: 8px;
  height: 1px;
  background: #666;
}

/* formula bar */
.formula {
  height: 35px;
  flex: none;
  display: flex;
  align-items: stretch;
  padding: 0 4px 0 5px;
}

.namebox {
  width: 154px;
  border: 1px solid #c6c6c6;
  display: flex;
  align-items: center;
  justify-content: space-between;
  padding: 0 10px 0 7px;
  color: #111;
  font-size: 18px;
}

.fdots {
  width: 46px;
  display: flex;
  flex-direction: column;
  align-items: center;
  justify-content: center;
  gap: 3px;
}

.fdots i {
  width: 3px;
  height: 3px;
  background: #b0b0b0;
}

.fbtns {
  width: 164px;
  border: 1px solid #c6c6c6;
  display: flex;
  align-items: center;
  padding-left: 18px;
  gap: 36px;
}

.fx {
  font-family: "Liberation Serif", serif;
  font-style: italic;
  font-weight: 700;
  font-size: 23px;
  color: #666;
}

.finput {
  flex: 1;
  margin-left: 4px;
  border: 1px solid #c6c6c6;
  display: flex;
  align-items: center;
  justify-content: flex-end;
  padding-right: 4px;
}

/* worksheet */
.workspace {
  margin-top: 10px;
  height: 650px;
  flex: none;
  display: flex;
}

.sheet {
  position: relative;
  width: 1890px;
  overflow: hidden;
  border-bottom: 1px solid #ababab;
}

.grid {
  border-collapse: collapse;
  table-layout: fixed;
  width: 1890px;
  font-family: Lato, Carlito, sans-serif;
  font-size: 17.500px;
  font-variant-ligatures: none;
  color: #000;
}

.c-rh { width: 39px; }
.c-a { width: 50px; }
.c-b { width: 150px; }
.c-c { width: 275px; }
.c-d { width: 82px; }
.c-e { width: 49px; }
.c-f { width: 48px; }
.c-g { width: 221px; }
.c-h { width: 277px; }
.c-i { width: 142px; }
.c-j { width: 109px; }
.c-k { width: 185px; }
.c-l { width: 101px; }
.c-m { width: 162px; }

.hdr { height: 25px; }
.r-title { height: 57px; }
.r25 { height: 25px; }
.r26 { height: 26px; }

.grid td {
  padding: 0 0 0 5px;
  border: 1px solid #d4d4d4;
  white-space: nowrap;
  overflow: hidden;
}

.grid th {
  padding: 0;
  font-family: "Open Sans", sans-serif;
  font-weight: 400;
  font-size: 16.500px;
  color: #444;
  text-align: center;
}

.hdr th {
  border-right: 1px solid #d4d4d4;
  border-bottom: 1px solid #9f9f9f;
}

.grid th.corner {
  vertical-align: bottom;
  text-align: right;
}

.corner svg {
  display: block;
  margin: 0 3px 3px auto;
}

.rownum {
  border-right: 1px solid #9f9f9f;
  border-bottom: 1px solid #d4d4d4;
}

.grid th.rownum-low {
  vertical-align: bottom;
  padding-bottom: 5px;
}

.grid th.col-on {
  background: #e1e1e1;
  color: #217346;
  font-weight: 700;
  border-bottom: 2px solid #217346;
  padding-left: 29px;
}

.grid th.row-on {
  background: #e1e1e1;
  color: #217346;
  font-weight: 700;
  border-right: 2px solid #217346;
}

.grid td.sel {
  border: 2px solid #217346;
}

.grid td.title-cell {
  background: #ffff00;
  border-bottom: 3px solid #000;
  padding: 0 0 0 7px;
  font-family: Lato, sans-serif;
  font-weight: 700;
  font-size: 37.500px;
}

.title-row {
  display: flex;
  align-items: center;
}

.title-main {
  margin-left: 333px;
  font-size: 40px;
  letter-spacing: .65px;
}

/* pivot tables */
.grid td.p1 {
  border: 1px solid #000;
  padding-left: 4px;
}

.grid td.p1-l { border-left-width: 2px; }
.grid td.p1-r { border-right-width: 2px; }
.grid td.p1-t { border-top-width: 2px; }

.head {
  background: #ddebf7;
  font-weight: 700;
}

.caps {
  font-size: 16px;
}

.hd-cell {
  display: flex;
  align-items: center;
  justify-content: space-between;
}

.hd-center span:first-child {
  margin-left: 26px;
}

.filter {
  width: 24px;
  height: 24px;
  flex: none;
  border: 1px solid #b0b0b0;
  background: linear-gradient(#fdfdfd, #e9e9e9);
  display: flex;
  align-items: center;
  justify-content: center;
}

.filter .caret {
  border-left-width: 5px;
  border-right-width: 5px;
  border-top-width: 6px;
}

.grid td.pv-g {
  border: 0;
  border-left: 2px solid #000;
  border-right: 2px solid #000;
}

.grid td.pv-gg {
  border-top: 2px solid #000;
  border-bottom: 2px solid #000;
}

.grid td.item {
  padding-left: 41px;
}

.bold {
  font-weight: 700;
}

.grid td.ctr {
  padding-left: 58px;
}

.minus {
  margin-right: 3px;
  vertical-align: -2px;
}

.grid td.pv-top {
  border: 0;
  border-top: 2px solid #000;
  border-bottom: 2px solid #000;
}

.grid td.pv-sub {
  border: 0;
  border-bottom: 1px solid #9dc3e6;
}

.grid td.pv-v {
  border: 0;
}

.grid td.pv-tot {
  border: 0;
  border-top: 1px solid #9dc3e6;
  border-bottom: 2px solid #000;
}

.grid td.pv-r {
  border-right: 2px solid #000;
}

.grid td.num {
  text-align: center;
  padding: 0;
}

.grid td.tot {
  text-align: right;
  padding: 0 4px 0 0;
  font-weight: 700;
}

.grid td.pv-sub.tot:not(.pv-r) {
  padding-right: 5px;
}

.grid td.hd-avenue {
  padding-left: 2px;
}

/* charts lie over the sheet */
.chart {
  position: absolute;
}

.chart svg {
  display: block;
}

.chart-bars {
  left: 89px;
  top: 259px;
  width: 581px;
  height: 379px;
  background: #fff;
  border: 1px solid #d9d9d9;
  font-family: Lato, sans-serif;
  font-variant-ligatures: none;
}

.t-title {
  font-size: 22.200px;
  font-weight: 700;
  fill: #fff;
  text-anchor: middle;
}

.t-axis text {
  font-size: 14px;
  fill: #595959;
  text-anchor: end;
  font-weight: 700;
}

.t-label text,
.t-cat text {
  font-size: 14px;
  fill: #404040;
  text-anchor: middle;
  font-weight: 700;
}

.t-cat text {
  font-size: 14.800px;
  fill: #595959;
}

.t-axtitle {
  font-size: 16.500px;
  font-weight: 700;
  fill: #595959;
  text-anchor: middle;
  dominant-baseline: middle;
}

.t-axtitle-y {
  font-size: 16px;
}

.t-legend text {
  font-size: 14.800px;
  font-weight: 700;
  fill: #595959;
}

.chart-radar {
  left: 1334px;
  top: 107px;
  width: 544px;
  height: 418px;
  background: radial-gradient(circle at 50% 50%, #5a5a5a, #2c2c2c 90%);
  font-family: Lato, sans-serif;
  font-variant-ligatures: none;
}

.r-title {
  font-size: 22px;
  font-weight: 700;
  fill: #d9d9d9;
  text-anchor: middle;
}

.r-web path {
  fill: none;
  stroke: #b3c6da;
  stroke-width: 1;
}

.r-axis text {
  font-size: 14px;
  fill: #8f8f8f;
  text-anchor: middle;
}

.r-cat text {
  font-size: 13.800px;
  font-weight: 700;
  fill: #d0d0d0;
  text-anchor: middle;
}

.r-series {
  filter: drop-shadow(2px 3px 2px rgba(0, 0, 0, .55));
}

.r-data text {
  font-size: 14px;
  fill: #fff;
  text-anchor: middle;
}

.r-legend text {
  font-size: 14.200px;
  fill: #d9d9d9;
}

/* vertical scrollbar */
.vscroll {
  width: 29px;
  padding: 1px 2px 0 3px;
  display: flex;
  flex-direction: column;
  background: #f1f1f1;
}

.vbtn {
  height: 24px;
  flex: none;
  background: #fff;
  border: 1px solid #ababab;
  display: flex;
  align-items: center;
  justify-content: center;
}

.vthumb {
  height: 181px;
  flex: none;
  background: #fff;
  border: 1px solid #ababab;
  margin-top: 1px;
}

.vtrack {
  flex: 1;
}

.tri-scroll-up {
  border-left: 6px solid transparent;
  border-right: 6px solid transparent;
  border-bottom: 7px solid #777;
}

.tri-scroll-down {
  border-left: 5px solid transparent;
  border-right: 5px solid transparent;
  border-top: 7px solid #777;
}

/* sheet tabs */
.sheetbar {
  height: 31px;
  flex: none;
  display: flex;
  align-items: stretch;
  background: #f1f1f1;
  font-size: 19.300px;
  color: #444;
}

.sheet-nav {
  width: 119px;
  display: flex;
  align-items: center;
  gap: 29px;
  padding-left: 28px;
  border-right: 1px solid #b0b0b0;
  margin: 3px 0;
}

.tri-left {
  border-top: 6px solid transparent;
  border-bottom: 6px solid transparent;
  border-right: 6px solid #b5b5b5;
}

.tri-right {
  border-top: 6px solid transparent;
  border-bottom: 6px solid transparent;
  border-left: 6px solid #b5b5b5;
}

.tri-dark {
  border-left-color: #777;
  border-right-color: #777;
}

.stab {
  flex: none;
  padding-left: 23px;
  display: flex;
  align-items: center;
  white-space: nowrap;
}

.stab-sep {
  border-right: 1px solid #b0b0b0;
  margin: 3px 0;
}

.stab-1 { width: 324px; }
.stab-2 { width: 370px; }

.stab-3 {
  width: 94px;
  padding-left: 13px;
}

.stab-on {
  width: 94px;
  padding: 0;
  justify-content: center;
  background: #fff;
  color: #217346;
  font-size: 18.500px;
  font-weight: 700;
  border: 1px solid #ababab;
  border-top: 0;
  border-bottom: 3px solid #217346;
  margin-top: -1px;
}

.stab-data {
  width: 122px;
  padding-left: 15px;
  border-right: 1px solid #b0b0b0;
  margin: 3px 0;
}

.stab-add {
  align-self: center;
  margin-left: 39px;
}

.hscroll-wrap {
  margin-left: auto;
  display: flex;
  align-items: center;
  padding-right: 26px;
}

.fdots-h {
  width: 36px;
}

.hscroll {
  width: 499px;
  height: 25px;
  display: flex;
  border: 1px solid #ababab;
  background: #ebebeb;
}

.hbtn {
  width: 25px;
  background: #fff;
  display: flex;
  align-items: center;
  justify-content: center;
}

.hthumb {
  width: 202px;
  background: #fff;
  border: 1px solid #ababab;
  border-width: 0 1px;
}

.htrack {
  flex: 1;
}
```
